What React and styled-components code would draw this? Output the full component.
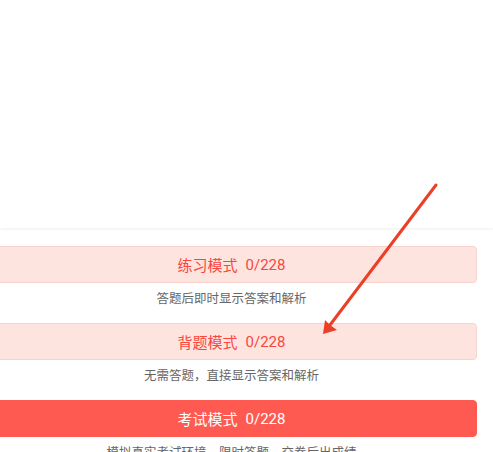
import React from "react";
import styled, { createGlobalStyle } from "styled-components";

const Global = createGlobalStyle`
  html, body {
    margin: 0;
    padding: 0;
    background: #fff;
    overflow: hidden;
  }
  body {
    font-family: Roboto, "Noto Sans CJK SC", sans-serif;
  }
`;

const Page = styled.div`
  position: relative;
  width: 493px;
  height: 452px;
  overflow: hidden;
  background: #fff;
`;

const TopPanel = styled.div`
  height: 228px;
  background: #fff;
  box-shadow: 0 1px 3px rgba(0, 0, 0, 0.07);
`;

const ModeList = styled.div`
  display: flex;
  flex-direction: column;
  margin: 18px 16px 0 -14px;
`;

const ModeButton = styled.div`
  height: 37px;
  box-sizing: border-box;
  display: flex;
  align-items: center;
  justify-content: center;
  border-radius: 4px;
  font-size: 15px;
  border: 1px solid ${(p) => (p.$active ? "#ff5a51" : "#f8d3cd")};
  background: ${(p) => (p.$active ? "#ff5a51" : "#fee4df")};
  color: ${(p) => (p.$active ? "#fff" : "#f9473d")};
`;

const Count = styled.span`
  margin-left: 8px;
`;

const Caption = styled.div`
  margin: 6px 0 14px;
  line-height: 20px;
  font-size: 12.5px;
  color: #666;
  text-align: center;
`;

const Overlay = styled.svg`
  position: absolute;
  left: 0;
  top: 0;
  pointer-events: none;
`;

const modes = [
  { name: "练习模式", count: "0/228", tip: "答题后即时显示答案和解析" },
  { name: "背题模式", count: "0/228", tip: "无需答题，直接显示答案和解析" },
  { name: "考试模式", count: "0/228", tip: "模拟真实考试环境，限时答题，交卷后出成绩", active: true },
];

export default function App() {
  return (
    <Page>
      <Global />
      <TopPanel />
      <ModeList>
        {modes.map((m) => (
          <div key={m.name}>
            <ModeButton $active={m.active}>
              <span>{m.name}</span>
              <Count>{m.count}</Count>
            </ModeButton>
            <Caption>{m.tip}</Caption>
          </div>
        ))}
      </ModeList>
      <Overlay width="493" height="452" viewBox="0 0 493 452">
        <line x1="436" y1="185" x2="330" y2="325" stroke="#ec3f27" strokeWidth="3" strokeLinecap="round" />
        <polygon points="323,334 325,320 330,325 337,330" fill="#ec3f27" />
      </Overlay>
    </Page>
  );
}
